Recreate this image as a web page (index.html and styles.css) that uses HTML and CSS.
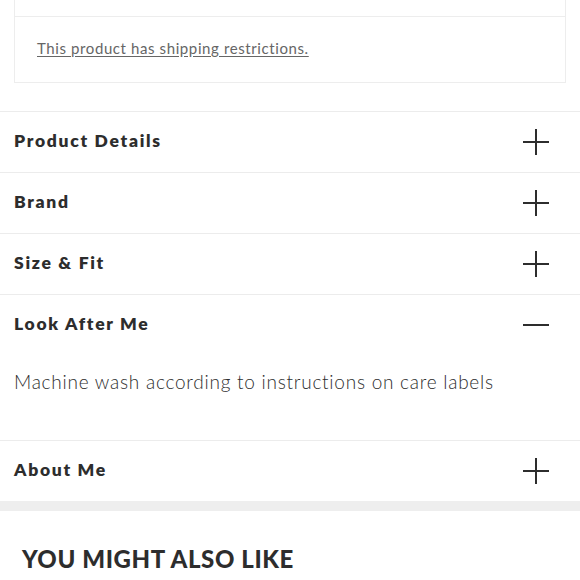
FILE: index.html
```html
<!DOCTYPE html>
<html lang="en">
<head>
<meta charset="utf-8">
<title>Product info</title>
<link rel="stylesheet" href="styles.css">
</head>
<body>
<div class="panel">
  <div class="panel-top"></div>
  <div class="panel-note"><a class="note-link" href="#">This product has shipping restrictions.</a></div>
</div>

<div class="accordion">
  <div class="acc-item">
    <div class="acc-head"><h3 class="acc-title">Product Details</h3><svg class="acc-icon" viewBox="0 0 26 26"><path d="M0 13H26M13 0V26" /></svg></div>
  </div>
  <div class="acc-item">
    <div class="acc-head"><h3 class="acc-title">Brand</h3><svg class="acc-icon" viewBox="0 0 26 26"><path d="M0 13H26M13 0V26" /></svg></div>
  </div>
  <div class="acc-item">
    <div class="acc-head"><h3 class="acc-title">Size &amp; Fit</h3><svg class="acc-icon" viewBox="0 0 26 26"><path d="M0 13H26M13 0V26" /></svg></div>
  </div>
  <div class="acc-item">
    <div class="acc-head"><h3 class="acc-title">Look After Me</h3><svg class="acc-icon" viewBox="0 0 26 26"><path d="M0 13H26" /></svg></div>
    <div class="acc-body">Machine wash according to instructions on care labels</div>
  </div>
  <div class="acc-item">
    <div class="acc-head"><h3 class="acc-title">About Me</h3><svg class="acc-icon" viewBox="0 0 26 26"><path d="M0 13H26M13 0V26" /></svg></div>
  </div>
</div>

<div class="band"></div>

<section class="also">
  <h2 class="also-title">YOU MIGHT ALSO LIKE</h2>
</section>
</body>
</html>
```

FILE: styles.css
```css
html, body {
  margin: 0;
  padding: 0;
  background: #fff;
}
body {
  font-family: "Lato", "Liberation Sans", sans-serif;
  color: #2d2d2d;
}
.panel {
  margin: 0 14px;
  border: 1px solid #ededed;
  border-top: none;
}
.panel-top {
  height: 16px;
  border-bottom: 1px solid #ededed;
}
.panel-note {
  height: 65px;
  display: flex;
  align-items: center;
  padding-left: 22px;
  padding-bottom: 4px;
  box-sizing: border-box;
}
.note-link {
  font-size: 15px;
  color: #666;
  letter-spacing: 0.6px;
  text-decoration: underline;
  text-underline-offset: 2px;
}
.accordion {
  margin-top: 28px;
}
.acc-item {
  border-top: 1px solid #ececec;
}
.acc-head {
  height: 60px;
  display: flex;
  align-items: center;
  justify-content: space-between;
  padding: 0 31px 0 14px;
}
.acc-title {
  margin: 0 0 3px;
  font-size: 17.5px;
  font-weight: 800;
  letter-spacing: 1.7px;
}
.acc-icon {
  width: 26px;
  height: 26px;
  stroke: #2d2d2d;
  stroke-width: 2;
  fill: none;
}
.acc-body {
  padding: 13px 14px 44px;
  font-size: 19px;
  line-height: 28px;
  font-weight: 300;
  letter-spacing: 0.75px;
  color: #2d2d2d;
}
.band {
  height: 10px;
  background: #eeeeee;
}
.also {
  padding: 33px 22px 0;
}
.also-title {
  margin: 0;
  font-size: 24px;
  font-weight: 900;
  letter-spacing: 0.6px;
}
```
